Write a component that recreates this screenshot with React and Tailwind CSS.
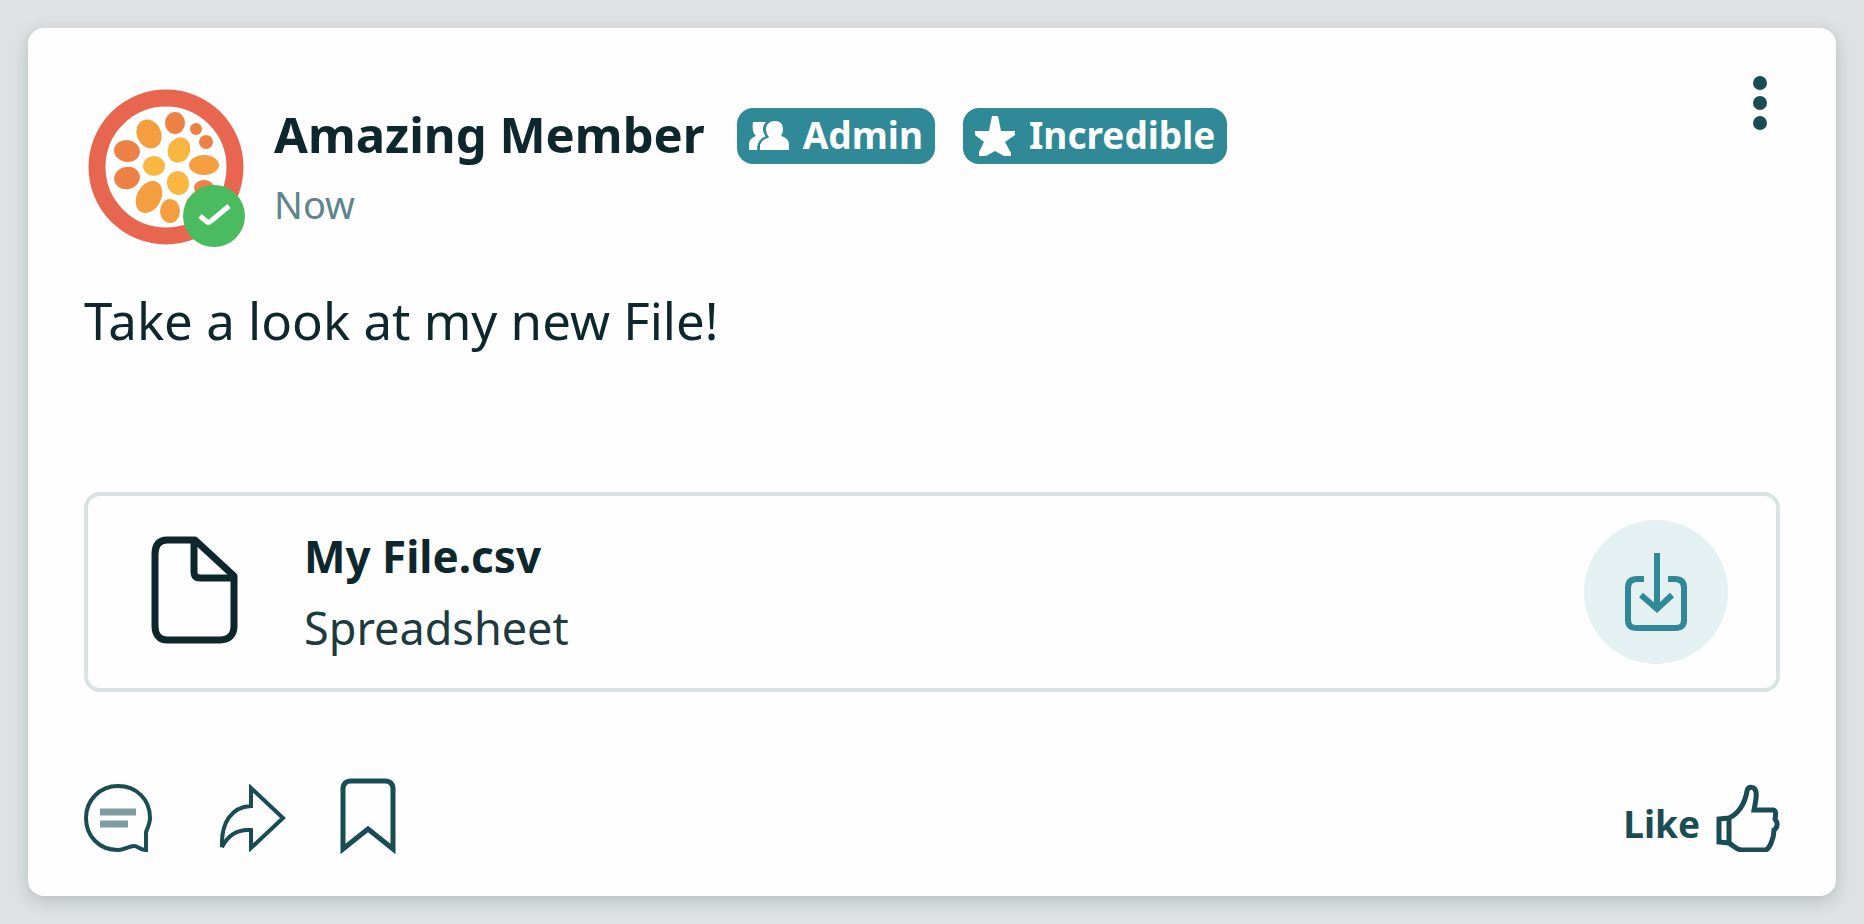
const seeds = [
  { cx: 61, cy: 46, rx: 12, ry: 15, rotate: -25, fill: '#f59e3f' },
  { cx: 87, cy: 35, rx: 10, ry: 11, rotate: 0, fill: '#ee8145' },
  { cx: 108, cy: 41, rx: 6, ry: 6, rotate: 0, fill: '#ee8145' },
  { cx: 118, cy: 54, rx: 7, ry: 7, rotate: 0, fill: '#ee8145' },
  { cx: 39, cy: 63, rx: 13, ry: 11, rotate: 10, fill: '#ee8145' },
  { cx: 91, cy: 62, rx: 11, ry: 13, rotate: 25, fill: '#f9b641' },
  { cx: 66, cy: 78, rx: 11, ry: 10, rotate: 0, fill: '#f9b641' },
  { cx: 116, cy: 77, rx: 15, ry: 10, rotate: 0, fill: '#f59e3f' },
  { cx: 39, cy: 90, rx: 13, ry: 11, rotate: -15, fill: '#ee8145' },
  { cx: 90, cy: 95, rx: 11, ry: 12, rotate: -15, fill: '#f9b641' },
  { cx: 61, cy: 109, rx: 12, ry: 17, rotate: 28, fill: '#f59e3f' },
  { cx: 82, cy: 123, rx: 10, ry: 12, rotate: 0, fill: '#f59e3f' },
  { cx: 116, cy: 100, rx: 10, ry: 8, rotate: 0, fill: '#ee8145' },
  { cx: 106, cy: 116, rx: 8, ry: 8, rotate: 0, fill: '#ee8145' },
];

const Avatar = () => (
  <svg viewBox="0 0 158 160" className="w-[158px] h-[160px] shrink-0" role="img" aria-label="Amazing Member">
    <circle cx="78" cy="79" r="69" fill="#fff" stroke="#e8664f" strokeWidth="17" />
    {seeds.map((s) => (
      <ellipse
        key={`${s.cx}-${s.cy}`}
        cx={s.cx}
        cy={s.cy}
        rx={s.rx}
        ry={s.ry}
        fill={s.fill}
        transform={`rotate(${s.rotate} ${s.cx} ${s.cy})`}
      />
    ))}
    <circle cx="126" cy="128" r="31" fill="#4abb5f" />
    <path d="M112 128l7 6q2 1 4-1l18-15" fill="none" stroke="#fff" strokeWidth="5" />
  </svg>
);

const PeopleIcon = () => (
  <svg viewBox="0 0 40 30" className="w-10 h-[30px]" fill="currentColor" aria-hidden="true">
    <path d="M4 1h13c-3 3-4 8-1 12l1 3c-4 1-7 4-8 8l-1 5H0v-7c1-4 4-6 7-7-3-3-4-7-3-14z" />
    <path d="M26 0c5 0 8 3 8 8 0 3-1 5-2 7 4 1 8 4 8 8v6H11v-5c1-4 5-7 9-8-2-2-3-5-3-8 0-5 4-8 9-8z" />
    <path d="M17 3c-3 4-2 9 1 13-4 1-8 4-9 11" fill="none" stroke="#2f8996" strokeWidth="2" />
  </svg>
);

const StarIcon = () => (
  <svg viewBox="0 0 40 42" className="w-10 h-[42px]" fill="currentColor" aria-hidden="true">
    <path d="M17 1h6l3 15h14v4l-10 7 6 11v3h-7l-9-5-9 5H4v-4l5-10L0 20v-4h14z" />
  </svg>
);

const Badge = ({ icon, children }) => (
  <span className="flex items-center gap-3.5 h-14 px-3 rounded-2xl bg-[#2f8996] text-white text-[37px] leading-none font-bold">
    {icon}
    <span className="pb-1">{children}</span>
  </span>
);

const FileIcon = () => (
  <svg
    viewBox="0 0 92 108"
    className="w-[92px] h-[108px] shrink-0"
    fill="none"
    stroke="#0d272c"
    strokeWidth="7"
    strokeLinejoin="round"
    aria-hidden="true"
  >
    <path d="M19 4h28l39 36v50c0 9-5 14-14 14H19C11 104 7 98 7 90V18C7 9 11 4 19 4z" />
    <path d="M46 4v32c0 4 2 6 6 6h34" />
  </svg>
);

const DownloadIcon = () => (
  <svg viewBox="0 0 64 82" className="w-16 h-[82px]" fill="none" stroke="#2f8996" strokeWidth="6" aria-hidden="true">
    <path d="M20 28h-7c-6 0-9 3-9 9v32c0 6 3 8 9 8h38c6 0 9-2 9-8V37c0-6-3-9-9-9h-7" />
    <path d="M33 2v56M17 44l16 14 15-14" />
  </svg>
);

const iconProps = { fill: 'none', stroke: 'currentColor', strokeWidth: 4, 'aria-hidden': true };

const CommentIcon = () => (
  <svg viewBox="0 0 68 68" className="w-[68px] h-[68px]" {...iconProps}>
    <path d="M62 66V48c2-5 4-9 4-14C66 15 52 2 34 2S2 16 2 34s13 32 32 32c6 0 11-4 16-4 4 0 6 4 12 4z" />
    <path d="M16 28h36M16 40h28" stroke="#7f9ca1" strokeWidth="7" />
  </svg>
);

const ShareIcon = () => (
  <svg viewBox="0 0 68 68" className="w-[68px] h-[68px]" {...iconProps}>
    <path d="M31 4l32 30-32 30V46C18 45 8 51 2 63c-1-24 9-40 29-41z" />
  </svg>
);

const BookmarkIcon = () => (
  <svg viewBox="0 0 56 76" className="w-14 h-[76px]" {...iconProps} strokeWidth="5">
    <path d="M3 71V11c0-5 3-8 8-8h34c5 0 8 3 8 8v60L28 51z" />
  </svg>
);

const ThumbIcon = () => (
  <svg viewBox="0 0 64 68" className="w-16 h-[68px]" {...iconProps} strokeWidth="5">
    <path d="M3 35l10-1c9-4 16-14 18-27 1-5 8-5 9 1 1 6-1 12-2 18h19c3 0 3 4 2 9 3 4 3 8-1 11 0 9-5 20-9 20H26c-5 0-8-4-13-7L3 58z" />
    <path d="M13 34v25" />
  </svg>
);

export default function App() {
  return (
    <main className="min-h-screen p-7 bg-[#dee2e3] font-['Noto_Sans','Liberation_Sans',sans-serif] text-[#0d272c]">
      <article className="rounded-2xl bg-[#fefefe] px-14 pt-12 pb-[38px] shadow-[0_5px_18px_rgba(0,20,20,0.18)]">
        <header className="flex items-start gap-7 pl-1 pt-3">
          <Avatar />
          <div className="flex-1 pt-5">
            <div className="flex items-center gap-7">
              <h1 className="pb-1 pr-1 text-[49px] leading-13 font-bold">Amazing Member</h1>
              <Badge icon={<PeopleIcon />}>Admin</Badge>
              <Badge icon={<StarIcon />}>Incredible</Badge>
            </div>
            <p className="mt-4 text-[38px] leading-12 text-[#5f858b]">Now</p>
          </div>
          <button type="button" aria-label="More options" className="-mt-3 px-3 text-[#194c53]">
            <svg viewBox="0 0 16 56" className="w-4 h-14" fill="currentColor" aria-hidden="true">
              <circle cx="8" cy="7" r="7" />
              <circle cx="8" cy="27" r="7" />
              <circle cx="8" cy="47" r="7" />
            </svg>
          </button>
        </header>

        <p className="mt-10 text-[51px] leading-16">Take a look at my new File!</p>

        <section className="mt-[140px] flex items-center rounded-2xl border-4 border-[#dae2e3] h-[200px] pl-15 pr-12">
          <div className="pb-1">
            <FileIcon />
          </div>
          <div className="flex-1 ml-16">
            <h2 className="text-[44px] leading-18 font-bold">My File.csv</h2>
            <p className="text-[45px] leading-18 text-[#1d3a3f]">Spreadsheet</p>
          </div>
          <button
            type="button"
            aria-label="Download My File.csv"
            className="flex items-center justify-center size-36 rounded-full bg-[#e4f0f2]"
          >
            <DownloadIcon />
          </button>
        </section>

        <footer className="mt-[86px] flex items-center text-[#194c53]">
          <button type="button" aria-label="Comment">
            <CommentIcon />
          </button>
          <button type="button" aria-label="Share" className="ml-17">
            <ShareIcon />
          </button>
          <button type="button" aria-label="Bookmark" className="ml-13 pb-1">
            <BookmarkIcon />
          </button>
          <button type="button" className="ml-auto flex items-end gap-4 text-[37px] leading-14 font-bold">
            Like
            <ThumbIcon />
          </button>
        </footer>
      </article>
    </main>
  );
}
